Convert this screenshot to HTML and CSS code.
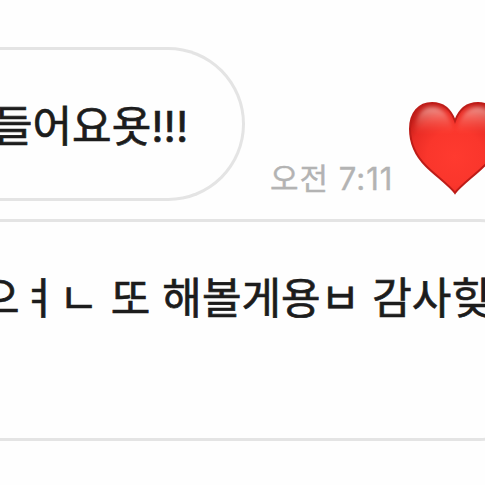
FILE: index.html
```html
<!DOCTYPE html>
<html lang="ko">
  <head>
    <meta charset="utf-8" />
    <title>채팅</title>
    <link rel="stylesheet" href="styles.css" />
  </head>
  <body>
    <div class="chat">
      <div class="row">
        <div class="bubble bubble-short">
          <p class="message message-short">들어요욧!!!</p>
        </div>
        <span class="time">오전 7:11</span>
        <svg class="heart" viewBox="0 0 94 94" width="94" height="94">
          <defs>
            <radialGradient id="heartFill" cx="50%" cy="60%" r="62%">
              <stop offset="0" stop-color="#ff3a2f" />
              <stop offset="0.5" stop-color="#fa362c" />
              <stop offset="0.8" stop-color="#e92c25" />
              <stop offset="1" stop-color="#c41d18" />
            </radialGradient>
            <linearGradient id="heartShine" x1="0" y1="0" x2="0" y2="1">
              <stop offset="0" stop-color="#ffd8d0" stop-opacity="0.65" />
              <stop offset="1" stop-color="#ff8070" stop-opacity="0" />
            </linearGradient>
            <filter id="soft">
              <feGaussianBlur stdDeviation="2" />
            </filter>
          </defs>
          <path class="heart-shape" d="M47 92 C42 85 27 74 18 65 C7 54 2 41 2 28 C2 12 11 2 24 2 C35 2 43 9 47 20 C51 9 59 2 70 2 C83 2 92 12 92 28 C92 41 87 54 76 65 C67 74 52 85 47 92 Z" />
          <path class="heart-shine" d="M7 32 C7 14 14 6 24 6 C35 6 41 14 45 27 L45 32 Z M49 32 L49 27 C53 14 59 6 70 6 C80 6 87 14 87 32 Z" />
        </svg>
      </div>
      <div class="bubble bubble-long">
        <p class="message message-long">으ㅕㄴ 또 해볼게용ㅂ 감사힞</p>
      </div>
    </div>
  </body>
</html>
```

FILE: styles.css
```css
body {
  margin: 0;
  background-color: #fefefe;
  font-family: "Noto Sans CJK KR", sans-serif;
  overflow: hidden;
}

.chat {
  width: 485px;
  height: 485px;
  padding-top: 47px;
  box-sizing: border-box;
  overflow: hidden;
}

.row {
  display: flex;
  height: 154px;
}

.bubble {
  box-sizing: border-box;
  border: 3px solid #e4e4e4;
  border-left: none;
}

.bubble-short {
  flex: none;
  width: 245px;
  height: 154px;
  padding-top: 46px;
  border-radius: 0 77px 77px 0;
}

.bubble-long {
  width: 557px;
  height: 222px;
  margin-top: 18px;
  padding-top: 43px;
  border-radius: 0 77px 77px 0;
}

.message {
  margin: 0;
  color: #1c1c1c;
  font-size: 43px;
  font-weight: 400;
  line-height: 60px;
  white-space: nowrap;
  -webkit-text-stroke: 0.7px #1c1c1c;
}

.message-short {
  margin-left: -7px;
  font-family: Inter, "Noto Sans CJK KR", sans-serif;
}

.message-long {
  margin-left: -20px;
}

.time {
  flex: none;
  width: 138px;
  margin: 110px 0 0 25px;
  color: #b3b3b3;
  font-family: Inter, "Noto Sans CJK KR", sans-serif;
  font-size: 31px;
  letter-spacing: 1px;
  line-height: 44px;
  white-space: nowrap;
  -webkit-text-stroke: 0.4px #b3b3b3;
}

.heart {
  flex: none;
  margin-top: 54px;
}

.heart-shape {
  fill: url(#heartFill);
  stroke: #bd1c18;
  stroke-width: 2;
}

.heart-shine {
  fill: url(#heartShine);
  filter: url(#soft);
}
```
